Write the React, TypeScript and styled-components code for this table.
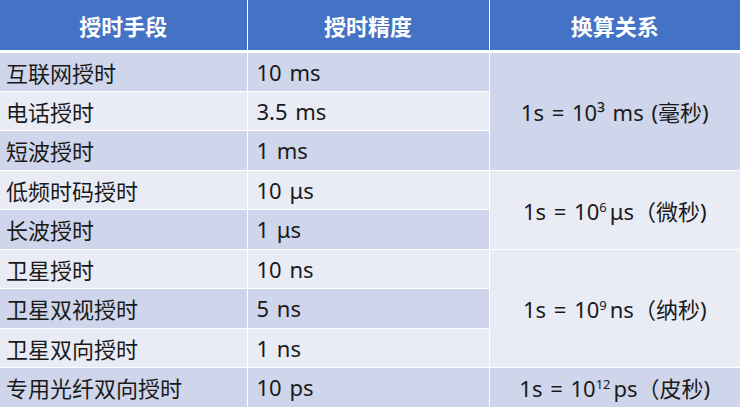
import styled, { createGlobalStyle } from 'styled-components';

const GlobalStyle = createGlobalStyle`
  html, body {
    margin: 0;
    padding: 0;
    background: #ffffff;
  }
  body {
    font-family: "Noto Sans", "Noto Sans CJK SC", sans-serif;
  }
`;

const Table = styled.table`
  width: 740px;
  border-collapse: collapse;
  table-layout: fixed;
  color: #1a1a1a;
  font-size: 22px;
`;

const HeadCell = styled.th`
  height: 50px;
  padding: 0;
  background: #4472c4;
  color: #ffffff;
  font-family: "Noto Sans CJK SC", sans-serif;
  font-weight: 700;
  font-size: 22px;
  text-align: center;
  vertical-align: middle;
  border-left: 1px solid #ffffff;
  border-bottom: 3px solid #ffffff;

  &:first-child {
    border-left: none;
  }
`;

const Cell = styled.td<{ $dark: boolean; $center?: boolean }>`
  height: 39.5px;
  padding: 0 0 0 ${(p) => (p.$center ? '0' : '9px')};
  box-sizing: border-box;
  background: ${(p) => (p.$dark ? '#cfd5ea' : '#e9ebf5')};
  text-align: ${(p) => (p.$center ? 'center' : 'left')};
  vertical-align: middle;
  border: 1px solid #ffffff;
  white-space: nowrap;
  word-spacing: 2px;

  &:first-child {
    border-left: none;
    padding-left: 6px;
  }
  &:last-child {
    border-right: none;
  }
`;

const Sup = styled.sup`
  font-size: 13px;
  vertical-align: 8px;
  line-height: 0;
  margin-right: 3px;
`;

type Row = { method: string; precision: string; relation?: { span: number; node: React.ReactNode } };

const rows: Row[] = [
  {
    method: '互联网授时',
    precision: '10 ms',
    relation: { span: 3, node: <>1s = 10³ ms (毫秒)</> },
  },
  { method: '电话授时', precision: '3.5 ms' },
  { method: '短波授时', precision: '1 ms' },
  {
    method: '低频时码授时',
    precision: '10 μs',
    relation: {
      span: 2,
      node: (
        <>
          1s = 10<Sup>6</Sup>μs（微秒)
        </>
      ),
    },
  },
  { method: '长波授时', precision: '1 μs' },
  {
    method: '卫星授时',
    precision: '10 ns',
    relation: {
      span: 3,
      node: (
        <>
          1s = 10<Sup>9</Sup>ns（纳秒)
        </>
      ),
    },
  },
  { method: '卫星双视授时', precision: '5 ns' },
  { method: '卫星双向授时', precision: '1 ns' },
  {
    method: '专用光纤双向授时',
    precision: '10 ps',
    relation: {
      span: 1,
      node: (
        <>
          1s = 10<Sup>12</Sup>ps（皮秒)
        </>
      ),
    },
  },
];

export default function App() {
  return (
    <>
      <GlobalStyle />
      <Table>
        <colgroup>
          <col style={{ width: 247 }} />
          <col style={{ width: 242 }} />
          <col />
        </colgroup>
        <thead>
          <tr>
            <HeadCell>授时手段</HeadCell>
            <HeadCell>授时精度</HeadCell>
            <HeadCell>换算关系</HeadCell>
          </tr>
        </thead>
        <tbody>
          {rows.map((r, i) => (
            <tr key={r.method}>
              <Cell $dark={i % 2 === 0}>{r.method}</Cell>
              <Cell $dark={i % 2 === 0}>{r.precision}</Cell>
              {r.relation && (
                <Cell $dark={i % 2 === 0} $center rowSpan={r.relation.span}>
                  {r.relation.node}
                </Cell>
              )}
            </tr>
          ))}
        </tbody>
      </Table>
    </>
  );
}
